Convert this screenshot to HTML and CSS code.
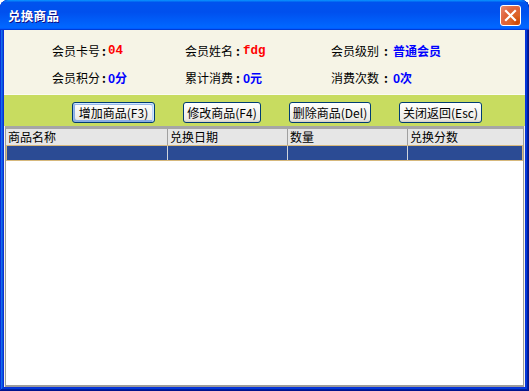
FILE: index.html
```html
<!DOCTYPE html>
<html lang="zh">
<head>
    <meta charset="UTF-8">
    <title>兑换商品</title>
    <link rel="stylesheet" href="styles.css">
</head>
<body>

<div class="window">
    <!-- Title bar -->
    <div class="title-bar">
        <span class="title">兑换商品</span>
        <button class="close-btn" title="关闭">
            <svg width="13" height="13" viewBox="0 0 13 13">
                <path d="M2 2 L11 11 M11 2 L2 11" stroke="#fff" stroke-width="2.2" stroke-linecap="square"/>
            </svg>
        </button>
    </div>

    <div class="client">
        <!-- Member info -->
        <div class="info">
            <div class="field"><span>会员卡号</span><b class="colon">:</b><b class="val red mono">04</b></div>
            <div class="field"><span>会员姓名</span><b class="colon mid">:</b><b class="val red mono">fdg</b></div>
            <div class="field"><span>会员级别</span><b class="colon wide">:</b><b class="val blue">普通会员</b></div>
            <div class="field"><span>会员积分</span><b class="colon">:</b><b class="val blue">0分</b></div>
            <div class="field"><span>累计消费</span><b class="colon mid">:</b><b class="val blue">0元</b></div>
            <div class="field"><span>消费次数</span><b class="colon wide">:</b><b class="val blue">0次</b></div>
        </div>

        <!-- Toolbar -->
        <div class="toolbar">
            <button class="btn default w83">增加商品(F3)</button>
            <button class="btn w78">修改商品(F4)</button>
            <button class="btn w82">删除商品(Del)</button>
            <button class="btn w83">关闭返回(Esc)</button>
        </div>

        <!-- List -->
        <div class="list">
            <div class="list-head">
                <div class="col c1">商品名称</div>
                <div class="col c2">兑换日期</div>
                <div class="col c3">数量</div>
                <div class="col c4">兑换分数</div>
            </div>
            <div class="list-row selected">
                <div class="col c1"></div>
                <div class="col c2"></div>
                <div class="col c3"></div>
                <div class="col c4"></div>
            </div>
        </div>
    </div>
</div>

</body>
</html>
```

FILE: styles.css
```css
body {
    margin: 0;
    padding: 0;
    background: #fff;
    font-family: "Noto Sans CJK SC", "DejaVu Sans", sans-serif;
    font-size: 12px;
    color: #000;
}

.window {
    width: 529px;
    height: 391px;
    box-sizing: border-box;
    display: flex;
    flex-direction: column;
    background: #0831d9;
    border-radius: 8px 8px 0 0;
    box-shadow: inset -1px -1px #00138c, inset 1px 1px #0831d9,
                inset -2px -2px #001ea0, inset 2px 2px #166aee,
                inset -3px -3px #003bda, inset 3px 3px #0855dd;
    overflow: hidden;
}

.title-bar {
    height: 30px;
    flex: none;
    display: flex;
    align-items: center;
    justify-content: space-between;
    padding: 1px 8px 0 8px;
    box-sizing: border-box;
    background: linear-gradient(180deg, #0997ff, #0053ee 8%, #0050ee 40%, #06f 88%, #06f 93%, #005bff 95%, #003dd7 96%, #003dd7);
    border-radius: 8px 8px 0 0;
}

.title {
    color: #fff;
    font-weight: bold;
    font-size: 12.5px;
    letter-spacing: 0.3px;
    text-shadow: 1px 1px #0f1089;
}

.close-btn {
    width: 21px;
    height: 21px;
    padding: 0;
    display: flex;
    align-items: center;
    justify-content: center;
    border: 1px solid #fff;
    border-radius: 3px;
    background: radial-gradient(circle at 85% 85%, #cc4600 0%, #dc6527 30%, #e0633a 60%, #e88b73 100%);
    box-sizing: border-box;
}

.client {
    flex: 1;
    display: flex;
    flex-direction: column;
    margin: 0 4px 4px 4px;
    background: #f6f4e6;
}

/* member info */
.info {
    height: 64px;
    flex: none;
    box-sizing: border-box;
    padding: 14px 0 0 48px;
    display: grid;
    grid-template-columns: 133px 146px auto;
    grid-auto-rows: 14px;
    row-gap: 13px;
    line-height: 14px;
}

.field {
    display: flex;
    align-items: center;
    white-space: nowrap;
}

.colon {
    display: inline-block;
    width: 8px;
    text-align: center;
}

.colon.mid {
    width: 10px;
}

.colon.wide {
    width: 14px;
}

.val {
    font-weight: bold;
}

.mono {
    font-family: "Liberation Mono", monospace;
    font-size: 12.5px;
}

.red {
    color: #f00;
}

.blue {
    color: #00f;
}

/* toolbar */
.toolbar {
    height: 32px;
    flex: none;
    box-sizing: border-box;
    border-top: 1px solid #fbfbf3;
    background: #c8dc60;
    display: flex;
    gap: 28px;
    padding: 7px 0 0 68px;
}

.btn {
    height: 21px;
    padding: 0;
    font-family: "Noto Sans CJK SC", "DejaVu Sans", sans-serif;
    font-size: 12px;
    line-height: 19px;
    color: #000;
    border: 1px solid #003c74;
    border-radius: 3px;
    background: linear-gradient(180deg, #fff, #ecebe6 86%, #d6d0c5);
    box-sizing: border-box;
    white-space: nowrap;
}

.btn.default {
    box-shadow: inset -1px 1px #cee7ff, inset 1px 2px #98b8ea,
                inset -2px 2px #bcd4f6, inset 1px -1px #89ade4,
                inset 2px -2px #89ade4;
}

.w83 { width: 83px; }
.w82 { width: 82px; }
.w78 { width: 78px; }

/* list view */
.list {
    flex: 1;
    margin: 0 1px 0 1px;
    background: #fff;
    border: 1px solid #9c9c9c;
    border-top: 3px solid #a6a6a6;
    border-bottom: 2px solid #9c9c9c;
}

.list-head {
    display: flex;
    height: 16px;
    line-height: 16px;
    background: #e6e6e6;
}

.list-head .col {
    border-right: 1px solid #a0a0a0;
    padding-left: 2px;
}

.col {
    box-sizing: border-box;
    white-space: nowrap;
}

.c1 { width: 162px; }
.c2 { width: 120px; }
.c3 { width: 120px; }
.c4 { flex: 1; }

.list-head .c4 {
    border-right: none;
}

.list-row {
    display: flex;
    height: 16px;
}

.list-row.selected {
    background: #2b4b94;
    border: 1px solid #d6b87c;
    box-sizing: border-box;
}

.list-row.selected .col {
    border-right: 1px solid #d0d4dc;
}

.list-row.selected .c1 { width: 161px; }

.list-row.selected .c4 {
    border-right: none;
}
```
